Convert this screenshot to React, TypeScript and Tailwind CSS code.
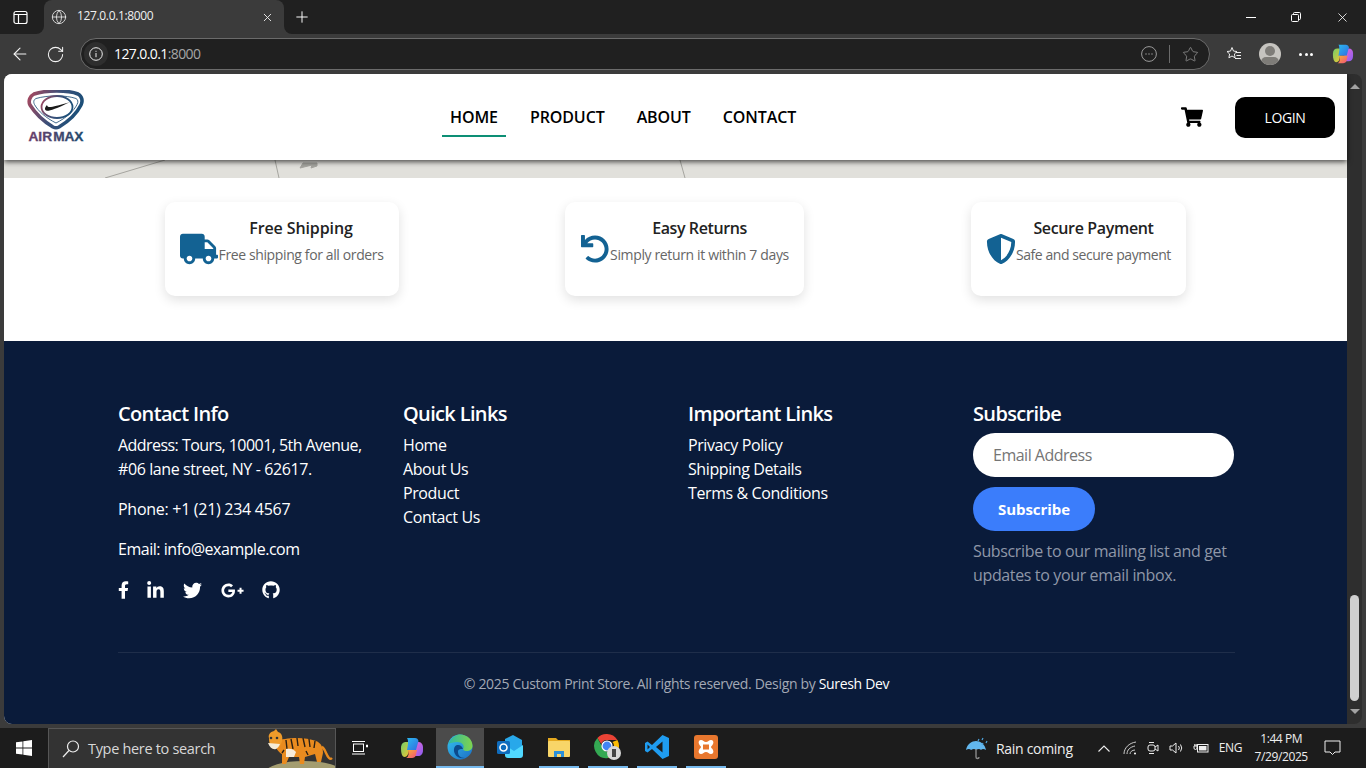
import React from "react";
import { Globe, X, Plus, ArrowLeft, RotateCw, Star } from "lucide-react";
import { FaTruck, FaUndo, FaShieldAlt, FaFacebookF, FaLinkedinIn, FaTwitter, FaGooglePlusG, FaGithub, FaShoppingCart } from "react-icons/fa";

const CopilotIcon = ({ size = 22, id = "a" }: { size?: number; id?: string }) => (
  <svg width={size} height={size} viewBox="0 0 24 24">
    <defs>
      <linearGradient id={`cp1${id}`} x1="0" y1="0" x2="1" y2="1"><stop offset="0" stopColor="#2bb8f0" /><stop offset="1" stopColor="#2f6de0" /></linearGradient>
      <linearGradient id={`cp2${id}`} x1="0" y1="0" x2="1" y2="1"><stop offset="0" stopColor="#e86ad6" /><stop offset="1" stopColor="#8a5cf0" /></linearGradient>
      <linearGradient id={`cp3${id}`} x1="0" y1="0" x2="1" y2="1"><stop offset="0" stopColor="#6fcf6a" /><stop offset="1" stopColor="#f7c52f" /></linearGradient>
      <linearGradient id={`cp4${id}`} x1="0" y1="0" x2="1" y2="1"><stop offset="0" stopColor="#f9b233" /><stop offset="1" stopColor="#f0507a" /></linearGradient>
    </defs>
    <path d="M13 6h5.500C21 6 23 8 23 11v3c0 4-2 6-5 6h-4Z" fill={`url(#cp2${id})`} />
    <path d="M1 12c0-4 2-6 5-6h4L8 18c-.5 2-2 3-3.500 3C2 21 1 17 1 12Z" fill={`url(#cp3${id})`} />
    <path d="M7 2h8c2 0 3 1 3.500 3L16 14H7l1-6c0-3 0-5-1-6Z" fill={`url(#cp1${id})`} />
    <path d="M8 14h9l-1 5c-.5 2-2 3-4 3H6c1.500-.5 2.200-2 2.500-3.500Z" fill={`url(#cp4${id})`} />
  </svg>
);

const LogoMark = () => (
  <svg width="60" height="54" viewBox="0 0 60 54">
    <defs>
      <linearGradient id="lg" x1="0" y1="0" x2="1" y2="0.3"><stop offset="0" stopColor="#a8485f" /><stop offset="0.55" stopColor="#3c4f78" /><stop offset="1" stopColor="#1d4f78" /></linearGradient>
      <linearGradient id="lt" x1="0" y1="0" x2="1" y2="0"><stop offset="0" stopColor="#6b3f6b" /><stop offset="1" stopColor="#1f4a6e" /></linearGradient>
    </defs>
    <path d="M8 4C20 0 42 0 52 4c4 2 5 7 3 11-4 8-12 16-22 22-2 1-4 1-6 0C17 31 9 23 4 15 2 11 4 6 8 4Z" fill="none" stroke="url(#lg)" strokeWidth="3.600" />
    <path d="M10 8.500C22 5 40 5 50 8.500c2 1 2.500 3.500 1 6C48 21 40 28 30 33 20 28 12 21 8.500 14.500c-1.500-3-.5-5 1.500-6Z" fill="none" stroke="#2d5a80" strokeWidth="0.900" />
    <ellipse cx="31" cy="17" rx="15.500" ry="11" fill="#fff" stroke="url(#lg)" strokeWidth="1.800" />
    <path d="M21 15c-2.500 2.500-2.800 5.500 0 5.800 3 .2 9-2 23-8.800-8 2.500-15 4.500-19 5-2.500.3-4-.5-4-2Z" fill="#1a1a1a" />
    <text x="2.500" y="50.500" fontFamily="'Liberation Sans', sans-serif" fontWeight="700" fontSize="12" stroke="url(#lt)" strokeWidth="0.300" textLength="55" lengthAdjust="spacingAndGlyphs" fill="url(#lt)">AIR<tspan dx="1">MAX</tspan></text>
  </svg>
);

const Tiger = () => (
  <svg width="74" height="40" viewBox="0 0 72 40" className="shrink-0">
    <ellipse cx="42" cy="43" rx="38" ry="11" fill="#a49d70" />
    <path d="M14 12c8-3 28-5 40 0 5 2 7 6 7 12l-2 9h-4l-2-8-10 3-1 7h-4l-1-7-10 0-3 7h-4l0-10c-4-2-7-6-6-13Z" fill="#e98b1f" />
    <path d="M7 9c-1-3 1-6 5-7l2-2 2 3c4 1 5 5 4 9-1 5-4 8-8 8-3-1-5-5-5-11Z" fill="#ef9b2a" />
    <path d="M6 14c2 5 5 7 8 6 2-1 3-3 4-5Z" fill="#f5ecd7" />
    <circle cx="9" cy="9" r="1.300" fill="#333" /><circle cx="15" cy="9" r="1.300" fill="#333" />
    <path d="M24 11l1 9M29 10l2 10M35 9l1 8M41 9l2 9M47 10l1 8M53 12l-1 7M20 24l2-3M44 22l2 4" stroke="#2b2014" strokeWidth="1.400" fill="none" />
    <path d="M24 20c4-1 8 0 10 3l-2 5h-8Z" fill="#f8ecdb" />
    <path d="M60 18c3 1 4 8 7 11 1 1 2 1 3 0" stroke="#e98b1f" strokeWidth="2.400" fill="none" />
  </svg>
);

const Task = ({ children, under, active }: { children?: React.ReactNode; under?: boolean; active?: boolean }) => (
  <div className={active ? "w-[48px] h-full flex flex-col items-center bg-[#4b4b4b] mr-[1px]" : "w-[49px] h-full flex flex-col items-center"}>
    <div className="flex-1 flex items-center justify-center">{children}</div>
    {active ? <div className="h-[2px] w-full bg-[#76b9ed]" /> : under ? <div className="h-[2px] w-[40px] bg-[#76b9ed]" /> : <div className="h-[2px]" />}
  </div>
);

const cards = [
  { w: "w-[234px]", ml: "", tr: "tracking-[-0.1px]", dtr: "tracking-[-0.38px]", box: "w-[38px]", pr: "pr-[15px]", icon: <FaTruck size={38} />, t: "Free Shipping", d: "Free shipping for all orders" },
  { w: "w-[239px]", ml: "ml-[166px]", tr: "tracking-[-0.4px]", dtr: "tracking-[-0.36px]", box: "w-[30px]", pr: "pr-[15px]", icon: <FaUndo size={28} />, t: "Easy Returns", d: "Simply return it within 7 days" },
  { w: "w-[215px]", ml: "ml-[167px]", tr: "tracking-[-0.35px]", dtr: "tracking-[-0.44px]", box: "w-[30px]", pr: "pr-[16px]", icon: <FaShieldAlt size={30} />, t: "Secure Payment", d: "Safe and secure payment" },
];

const Heading = ({ children }: { children: React.ReactNode }) => (
  <h3 className="text-[20px] leading-[24px] font-semibold text-white mb-[7px] tracking-[-0.65px]">{children}</h3>
);

export default function App() {
  return (
    <div className="w-[1366px] h-[768px] flex flex-col overflow-hidden bg-[#3b3b3b] font-['Open_Sans',sans-serif] text-white">
      {/* title bar */}
      <div className="h-[34px] flex shrink-0">
        <div className="w-[44px] bg-[#202020] rounded-br-lg flex items-center pl-[13px]">
          <svg width="15" height="15" viewBox="0 0 15 15" fill="none" stroke="#fff" strokeWidth="1.200">
            <rect x="1" y="1.500" width="13" height="12" rx="2" />
            <path d="M1 4.500h13M5.500 4.500v9" />
          </svg>
        </div>
        <div className="w-[240px] bg-[#202020]">
          <div className="h-full bg-[#3b3b3b] rounded-t-lg flex items-center pl-[7px] pr-[10px]">
            <Globe size={16} strokeWidth={1.300} className="text-[#e8e8e8]" />
            <span className="ml-[10px] mb-[2px] text-[12px] tracking-[-0.35px] text-[#f0f0f0] flex-1">127.0.0.1:8000</span>
            <X size={13} strokeWidth={1.700} className="text-[#eeeeee]" />
          </div>
        </div>
        <div className="flex-1 bg-[#202020] rounded-bl-lg flex items-center pl-[9px]">
          <Plus size={18} strokeWidth={1.300} className="text-white" />
          <div className="ml-auto flex items-center text-white">
            <div className="w-[46px] flex justify-center pl-[1px]"><div className="w-[10px] h-[1px] bg-white" /></div>
            <div className="w-[46px] flex justify-center">
              <svg width="10" height="10" viewBox="0 0 10 10" fill="none" stroke="#fff" strokeWidth="1"><rect x="0.500" y="2.500" width="7" height="7" rx="1" /><path d="M2.500 2.500V1.500a1 1 0 0 1 1-1h5a1 1 0 0 1 1 1v5a1 1 0 0 1-1 1h-1" /></svg>
            </div>
            <div className="w-[46px] flex justify-center mr-[1px]"><X size={15} strokeWidth={1.300} /></div>
          </div>
        </div>
      </div>

      {/* toolbar */}
      <div className="h-[40px] flex items-center shrink-0">
        <div className="w-[80px] flex items-center pl-[10px] gap-[16px]">
          <ArrowLeft size={20} strokeWidth={1.300} className="text-[#f4f4f4]" />
          <RotateCw size={19} strokeWidth={1.300} className="text-[#f4f4f4]" />
        </div>
        <div className="w-[1130px] h-[32px] rounded-full bg-[#202020] border border-[#6b6b6b] flex items-center pl-[3px] pr-[10px]">
          <div className="w-[24px] h-[24px] rounded-full bg-[#2e2e2e] flex items-center justify-center">
            <svg width="14" height="14" viewBox="0 0 14 14" fill="none" stroke="#eee" strokeWidth="1"><circle cx="7" cy="7" r="6.300" /><path d="M7 6v4.200M7 3.800v1" /></svg>
          </div>
          <span className="ml-[6px] mb-[2px] text-[14px] tracking-[-0.6px] text-white">127.0.0.1<span className="text-[#a6a6a6]">:8000</span></span>
          <div className="ml-auto flex items-center">
            <svg width="16" height="16" viewBox="0 0 16 16" fill="none" stroke="#9a9a9a" strokeWidth="1"><circle cx="8" cy="8" r="7.400" /><path d="M4.500 8h1M7.500 8h1M10.500 8h1" strokeWidth="1.400" /></svg>
            <div className="w-[1px] h-[18px] bg-[#6b6b6b] mx-[12px]" />
            <Star size={17} strokeWidth={1} className="text-[#a0a0a0]" />
          </div>
        </div>
        <div className="ml-[16px] flex items-center">
          <svg width="16" height="16" viewBox="0 0 16 16" fill="none" stroke="#eee" strokeWidth="1"><path d="M6 1.500l1.500 3.600 3.500.4-2.600 2.500.7 3.800L6 10l-3.100 1.800.7-3.800L1 5.500l3.500-.4Z" /><path d="M10 6.500h5M10.500 9.500h4.500M9 12.500h6" /></svg>
          <div className="w-[22px] h-[22px] rounded-full bg-[#c6c4c0] ml-[17px] overflow-hidden flex flex-col items-center">
            <div className="w-[10px] h-[10px] rounded-full bg-[#7e7c78] mt-[3px] shrink-0" />
            <div className="w-[18px] h-[10px] rounded-full bg-[#7e7c78] mt-[1px] shrink-0" />
          </div>
          <div className="flex gap-[2.500px] ml-[18px]">
            <div className="w-[3px] h-[3px] bg-white rounded-full" /><div className="w-[3px] h-[3px] bg-white rounded-full" /><div className="w-[3px] h-[3px] bg-white rounded-full" />
          </div>
          <div className="ml-[19px]"><CopilotIcon id="a" /></div>
        </div>
      </div>

      {/* viewport */}
      <div className="h-[650px] shrink-0 mx-[4px] flex rounded-lg overflow-hidden">
        <div className="w-[1343px] flex flex-col bg-white text-black">
          <header className="h-[86px] shrink-0 bg-white flex items-center relative z-10 shadow-[0_2px_5px_rgba(0,0,0,0.65)] pl-[12px] pr-[12px]">
            <div className="w-[80px] flex justify-center"><LogoMark /></div>
            <nav className="flex items-center gap-[16px] ml-[346px]">
              {["HOME", "PRODUCT", "ABOUT", "CONTACT"].map((n, i) => (
                <div key={n} className={i === 0 ? "px-[8px] h-[40px] pt-[2px] flex items-center border-b-2 border-[#0d8f75]" : "px-[8px] h-[40px] flex items-center"}>
                  <span className="text-[16px] font-semibold tracking-[-0.1px]">{n}</span>
                </div>
              ))}
            </nav>
            <div className="ml-auto flex items-center">
              <FaShoppingCart size={22} />
              <button className="ml-[32px] w-[100px] h-[41px] bg-black text-white text-[14px] rounded-[10px] tracking-[-0.4px]">LOGIN</button>
            </div>
          </header>
          <div className="h-[18px] shrink-0 bg-[#e1e0db]">
            <svg width="1343" height="18" viewBox="0 0 1343 18" fill="none" stroke="#a5a49f" strokeWidth="1">
              <path d="M101 18L161 0M271 0l4 18M676 0l5 18" />
              <path d="M296 8l12-3-1 3 6-2 0-3-14 0Z" fill="#a5a49f" />
            </svg>
          </div>
          <div className="h-[163px] shrink-0 flex pl-[161px] pt-[24px]">
            {cards.map((c) => (
              <div key={c.t} className={`${c.w} ${c.ml} ${c.pr} h-[94px] rounded-[10px] bg-white shadow-[0_4px_12px_rgba(0,0,0,0.12)] flex items-center pl-[15px]`}>
                <div className={`${c.box} flex justify-center text-[#136293] shrink-0`}>{c.icon}</div>
                <div className="flex-1 text-center">
                  <h4 className={`text-[16px] leading-[24px] font-semibold text-[#222] mb-[4px] ${c.tr}`}>{c.t}</h4>
                  <p className={`text-[14px] leading-[21px] text-[#666] mb-[17px] whitespace-nowrap ${c.dtr}`}>{c.d}</p>
                </div>
              </div>
            ))}
          </div>
          <footer className="flex-1 bg-[#0a1b3a] text-white pl-[114px] pr-[112px] pt-[61px]">
            <div className="grid grid-cols-4 gap-[23px] text-[16px] leading-[24px] tracking-[-0.4px]">
              <div>
                <Heading>Contact Info</Heading>
                <p><span className="tracking-[-0.55px]">Address: Tours, 10001, 5th Avenue,</span> #06 lane street, NY - 62617.</p>
                <p className="mt-[16px] tracking-[-0.28px]">Phone: +1 (21) 234 4567</p>
                <p className="mt-[16px] tracking-[-0.47px]">Email: info@example.com</p>
                <div className="mt-[19px] h-[20px] flex items-center gap-[18px]">
                  <FaFacebookF className="w-[11px] h-[18px]" />
                  <FaLinkedinIn className="w-[17px] h-[19px]" />
                  <FaTwitter className="w-[19px] h-[19px] ml-[1px]" />
                  <FaGooglePlusG className="w-[23px] h-[19px] ml-[1px]" />
                  <FaGithub className="w-[18px] h-[18px]" />
                </div>
              </div>
              <div>
                <Heading>Quick Links</Heading>
                <ul><li>Home</li><li>About Us</li><li>Product</li><li>Contact Us</li></ul>
              </div>
              <div>
                <Heading>Important Links</Heading>
                <ul><li>Privacy Policy</li><li>Shipping Details</li><li>Terms &amp; Conditions</li></ul>
              </div>
              <div>
                <Heading>Subscribe</Heading>
                <input placeholder="Email Address" className="w-[261px] h-[44px] rounded-full bg-white px-[20px] text-[#555] text-[16px] tracking-[-0.5px] placeholder:text-[#757575] outline-none" />
                <button className="mt-[10px] w-[122px] h-[44px] rounded-full bg-[#3b7dfb] text-white font-bold text-[15px] tracking-[-0.05px] block">Subscribe</button>
                <p className="mt-[8px] text-[#8f97a8] tracking-[-0.36px]">Subscribe to our mailing list and get updates to your email inbox.</p>
              </div>
            </div>
            <div className="mt-[52px] border-t border-[#1f2e4a] pt-[20px] text-center text-[14px] leading-[21px] text-[#a3a9b5] tracking-[-0.33px]">
              © 2025 Custom Print Store. All rights reserved. Design by <span className="text-white">Suresh Dev</span>
            </div>
          </footer>
        </div>
        <div className="w-[15px] bg-[#2e2e2e] flex flex-col items-center pt-[10px]">
          <div className="w-0 h-0 border-x-[5px] border-x-transparent border-b-[5px] border-b-[#a3a3a3]" />
          <div className="w-[9px] h-[106px] rounded-full bg-[#cfcfcf] mt-[506px]" />
          <div className="w-0 h-0 mt-[8px] border-x-[5px] border-x-transparent border-t-[5px] border-t-[#a3a3a3]" />
        </div>
      </div>

      {/* taskbar */}
      <div className="mt-auto h-[40px] shrink-0 bg-[#1c1c1c] flex items-center text-white">
        <div className="w-[48px] flex justify-center">
          <svg width="16" height="16" viewBox="0 0 16 16" fill="#fff"><path d="M0 2.300l6.500-.9v6.200H0ZM7.300 1.300L16 0v7.600H7.300ZM0 8.400h6.500v6.200L0 13.700ZM7.300 8.400H16V16l-8.700-1.300Z" /></svg>
        </div>
        <div className="w-[288px] h-full bg-[#333] border border-[#565656] border-b-0 flex items-center pl-[12px] overflow-hidden">
          <svg width="20" height="20" viewBox="0 0 20 20" fill="none" stroke="#eee" strokeWidth="1.200" className="shrink-0"><circle cx="12" cy="7.500" r="5.500" /><path d="M8 11.500L2 18" /></svg>
          <span className="ml-[7px] text-[14.500px] tracking-[-0.32px] text-[#d8d8d8] flex-1 whitespace-nowrap">Type here to search</span>
          <Tiger />
        </div>
        <div className="w-[48px] flex justify-center">
          <svg width="16" height="16" viewBox="0 0 16 16" fill="none" stroke="#fff" strokeWidth="1"><rect x="1.500" y="4" width="10" height="7.500" /><path d="M0 1.500h13M0 14h13" /><path d="M14 5.500h2M14 6.500h2" strokeWidth="1.500" /></svg>
        </div>
        <div className="flex h-full ml-[4px]">
          <div className="w-[48px] flex items-center justify-center"><CopilotIcon size={24} id="b" /></div>
          <Task active>
            <svg width="26" height="26" viewBox="0 0 26 26">
              <defs>
                <linearGradient id="ed1" x1="0" y1="0" x2="1" y2="1"><stop offset="0" stopColor="#35c1f1" /><stop offset="1" stopColor="#1b6fc4" /></linearGradient>
                <linearGradient id="ed2" x1="0" y1="0" x2="1" y2="0"><stop offset="0" stopColor="#2fb9a0" /><stop offset="1" stopColor="#7fd34e" /></linearGradient>
              </defs>
              <circle cx="13" cy="13" r="12.500" fill="url(#ed1)" />
              <path d="M1.500 10C4 3 10 .5 13 .5c7 0 12.500 5 12.500 11.500 0 3-2.500 5-6 5-2.500 0-4-1-3-3 1-3-2-6-6-6-4 0-7.500 1-9 2Z" fill="url(#ed2)" />
              <path d="M10 11c-3 1-4 5-2 9 1.500 3 5 5 10 4-5 0-7-3-7-6 0-3 2-3 5-3-1-3-3-4.500-6-4Z" fill="#0c4a8c" />
            </svg>
          </Task>
          <Task>
            <svg width="26" height="24" viewBox="0 0 26 24">
              <path d="M8 4l8-4 9 5v14a3 3 0 0 1-3 3H11a3 3 0 0 1-3-3Z" fill="#28a8ea" />
              <path d="M8 10l9 6 9-6v10a3 3 0 0 1-3 3H11a3 3 0 0 1-3-3Z" fill="#50d9ff" />
              <rect x="0" y="6" width="13" height="13" rx="1.500" fill="#0f6cbd" />
              <circle cx="6.500" cy="12.500" r="3.500" fill="none" stroke="#fff" strokeWidth="1.600" />
            </svg>
          </Task>
          <Task under>
            <svg width="24" height="24" viewBox="0 0 24 24">
              <path d="M1 3h8l2 2h12v3H1Z" fill="#e5a91f" />
              <rect x="1" y="6" width="22" height="16" rx="1" fill="#f8d568" />
              <path d="M7 22v-6h10v6h-3v-3h-4v3Z" fill="#2b8fd8" />
            </svg>
          </Task>
          <Task under>
            <svg width="28" height="28" viewBox="0 0 28 28">
              <path d="M13 1a12 12 0 0 1 10.400 6H13a6 6 0 0 0-5.700 4L3.400 5A12 12 0 0 1 13 1Z" fill="#ea4335" />
              <path d="M23.400 7A12 12 0 0 1 14 25l4.500-8a6 6 0 0 0 0-8Z" fill="#fbbc04" />
              <path d="M3.400 5A12 12 0 0 0 14 25l4-7a6 6 0 0 1-8-1Z" fill="#34a853" />
              <circle cx="13" cy="13" r="5" fill="#4285f4" stroke="#fff" strokeWidth="1.200" />
              <circle cx="20" cy="20" r="7" fill="#d8d8d8" />
              <path d="M18 16h4v8h-4Z" fill="#444" />
            </svg>
          </Task>
          <Task under>
            <svg width="24" height="24" viewBox="0 0 24 24">
              <path d="M17.500 0L24 3v18l-6.500 3L7 14l-4.500 3.500L0 16V8l2.500-1.500L7 10Z" fill="#1f9cf0" />
              <path d="M17.500 6.500L11 12l6.500 5.500Z" fill="#1c1c1c" />
              <path d="M2.500 9.500L5 12l-2.500 2.500Z" fill="#1c1c1c" />
            </svg>
          </Task>
          <Task under>
            <svg width="24" height="24" viewBox="0 0 24 24">
              <rect width="24" height="24" rx="3" fill="#e8772e" />
              <path d="M7 5c2 0 3 2 5 2s3-2 5-2 3 2 2 4c-1 2-2 2-2 3s1 1 2 3c1 2 0 4-2 4s-3-2-5-2-3 2-5 2-3-2-2-4c1-2 2-2 2-3s-1-1-2-3c-1-2 0-4 2-4Z" fill="#fff" />
              <rect x="9" y="9.500" width="6" height="5" fill="#e8772e" />
            </svg>
          </Task>
        </div>
        <div className="ml-[235px] flex items-center">
          <svg width="24" height="24" viewBox="0 0 24 24" fill="none">
            <path d="M1 14C2 8 7 5 11 5s9 3 10 9c-2-1.500-4-1.500-5 0-1-1.500-3-1.500-5 0-1-1.500-3-1.500-5 0-1-1.500-3-1.500-5 0Z" fill="#62b7ee" />
            <path d="M11 13v8c0 2 3 2 3 0" stroke="#8a8a8a" strokeWidth="1.400" />
            <path d="M14 3l-1 2M18 2l-1 2M22 5l-1 2M18 7l-1 2" stroke="#4fa6e0" strokeWidth="1.200" />
          </svg>
          <span className="ml-[7px] text-[14px] tracking-[-0.3px] text-[#eee]">Rain coming</span>
        </div>
        <svg width="12" height="7" viewBox="0 0 12 7" fill="none" stroke="#eee" strokeWidth="1.100" className="ml-[25px]"><path d="M0.500 6.500L6 1l5.500 5.500" /></svg>
        <svg width="14" height="14" viewBox="0 0 14 14" fill="none" stroke="#ccc" strokeWidth="1" className="ml-[13px]"><path d="M1 13C1 7 6 2 13 1M4 13c0-4 3-7 8-8M7 13c0-2 2-4 5-4" /><circle cx="12" cy="12.500" r="1" fill="#fff" stroke="none" /></svg>
        <svg width="12" height="14" viewBox="0 0 12 14" fill="none" stroke="#eee" strokeWidth="1" className="ml-[10px]"><rect x="1" y="4" width="7" height="6" rx="2" /><path d="M8 6l3-2v6l-3-2M2 1.500h5M2 12.500h5" /></svg>
        <svg width="15" height="14" viewBox="0 0 15 14" fill="none" stroke="#eee" strokeWidth="1" className="ml-[10px]"><path d="M1 5h2.500L7 2v10L3.500 9H1ZM9.500 5a3 3 0 0 1 0 4M11.500 3.500a6 6 0 0 1 0 7" /></svg>
        <svg width="16" height="10" viewBox="0 0 16 10" fill="none" stroke="#eee" strokeWidth="1" className="ml-[9px]"><rect x="4.500" y="1.500" width="10.500" height="7.500" /><rect x="6" y="3" width="7.500" height="4.500" fill="#eee" stroke="none" /><path d="M1 3v2a1.500 1.500 0 0 0 3 0V3ZM1.800 1v2M3.200 1v2" /></svg>
        <span className="ml-[10px] text-[12px] tracking-[-0.3px] text-[#eee]">ENG</span>
        <div className="ml-[12px] w-[54px] flex flex-col items-center text-[12px] leading-[18px] text-[#eee] tracking-[-0.4px] whitespace-nowrap">
          <span>1:44 PM</span>
          <span>7/29/2025</span>
        </div>
        <svg width="17" height="16" viewBox="0 0 17 16" fill="none" stroke="#eee" strokeWidth="1" className="ml-[16px]"><path d="M1 1h15v11h-5l-2.500 2.500L6 12H1Z" /></svg>
      </div>
    </div>
  );
}
